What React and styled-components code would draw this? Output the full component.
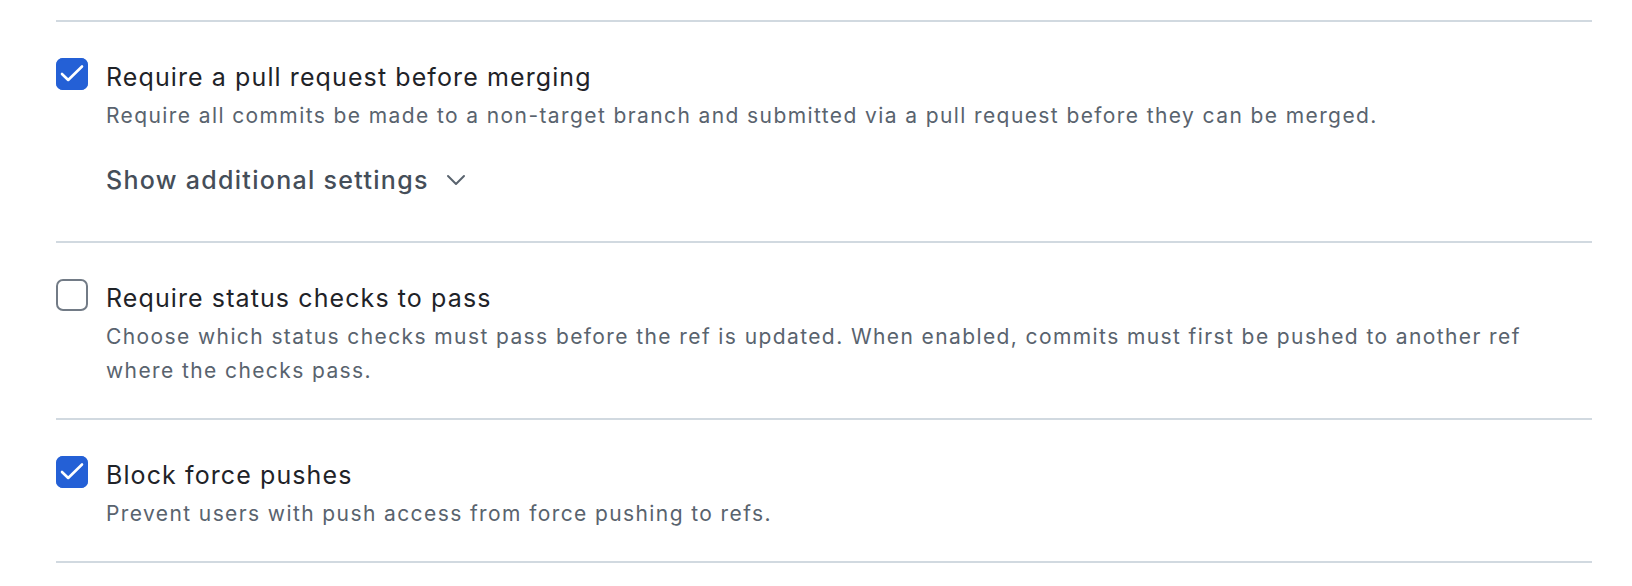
import React, { useState } from "react";
import styled, { createGlobalStyle } from "styled-components";

const GlobalStyle = createGlobalStyle`
  body {
    margin: 0;
    background: #ffffff;
    font-family: Inter, "Noto Sans", "Liberation Sans", sans-serif;
    color: #1f2328;
  }
`;

const Page = styled.div`
  padding: 20px 40px 0 56px;
`;

const RuleList = styled.ul`
  list-style: none;
  margin: 0;
  padding: 0;
  border-bottom: 2px solid #d1d9e0;
`;

const RuleItem = styled.li`
  border-top: 2px solid #d1d9e0;
  padding: 35px 0 30px;
  display: flex;
  gap: 18px;
`;

const CheckBox = styled.button`
  flex: none;
  width: 32px;
  height: 32px;
  margin-top: 1px;
  padding: 0;
  border: 0;
  border-radius: 7px;
  cursor: pointer;
  display: flex;
  align-items: center;
  justify-content: center;
  background: ${(props) => (props.$checked ? "#2460d6" : "#ffffff")};
  box-shadow: inset 0 0 0 2px
    ${(props) => (props.$checked ? "#2460d6" : "#727b86")};
`;

const Body = styled.div`
  display: flex;
  flex-direction: column;
  min-width: 0;
`;

const Title = styled.div`
  margin-top: 2px;
  font-size: 25px;
  line-height: 36px;
  letter-spacing: 1.1px;
  color: #1f2328;
`;

const Description = styled.p`
  margin: 4px 0 0;
  font-size: 21px;
  line-height: 34px;
  letter-spacing: 1.4px;
  color: #59636e;
  max-width: 1450px;
`;

const MoreButton = styled.button`
  align-self: flex-start;
  margin: 20px 0 4px;
  height: 54px;
  padding: 0;
  border: 0;
  background: transparent;
  display: flex;
  align-items: center;
  gap: 17px;
  font-family: inherit;
  font-size: 25px;
  font-weight: 500;
  letter-spacing: 1.3px;
  color: #454e59;
  cursor: pointer;
`;

const Check = () => (
  <svg width="32" height="32" viewBox="0 0 32 32" fill="none">
    <path
      d="M6 16 L12.2 22 L26 8.5"
      stroke="#ffffff"
      strokeWidth="2.6"
      strokeLinecap="round"
      strokeLinejoin="round"
    />
  </svg>
);

const Chevron = () => (
  <svg width="20" height="12" viewBox="0 0 20 12" fill="none">
    <path
      d="M2 2 L10 10 L18 2"
      stroke="#59636e"
      strokeWidth="2"
      strokeLinecap="round"
      strokeLinejoin="round"
    />
  </svg>
);

const rules = [
  {
    id: "pull-request",
    title: "Require a pull request before merging",
    description:
      "Require all commits be made to a non-target branch and submitted via a pull request before they can be merged.",
    checked: true,
    more: true,
  },
  {
    id: "status-checks",
    title: "Require status checks to pass",
    description:
      "Choose which status checks must pass before the ref is updated. When enabled, commits must first be pushed to another ref where the checks pass.",
    checked: false,
  },
  {
    id: "force-push",
    title: "Block force pushes",
    description: "Prevent users with push access from force pushing to refs.",
    checked: true,
  },
];

const App = () => {
  const [state, setState] = useState(
    Object.fromEntries(rules.map((r) => [r.id, r.checked]))
  );

  return (
    <>
      <GlobalStyle />
      <Page>
        <RuleList>
          {rules.map((rule) => (
            <RuleItem key={rule.id}>
              <CheckBox
                $checked={state[rule.id]}
                aria-label={rule.title}
                onClick={() =>
                  setState((s) => ({ ...s, [rule.id]: !s[rule.id] }))
                }
              >
                {state[rule.id] && <Check />}
              </CheckBox>
              <Body>
                <Title>{rule.title}</Title>
                <Description>{rule.description}</Description>
                {rule.more && (
                  <MoreButton>
                    Show additional settings
                    <Chevron />
                  </MoreButton>
                )}
              </Body>
            </RuleItem>
          ))}
        </RuleList>
      </Page>
    </>
  );
};

export default App;
